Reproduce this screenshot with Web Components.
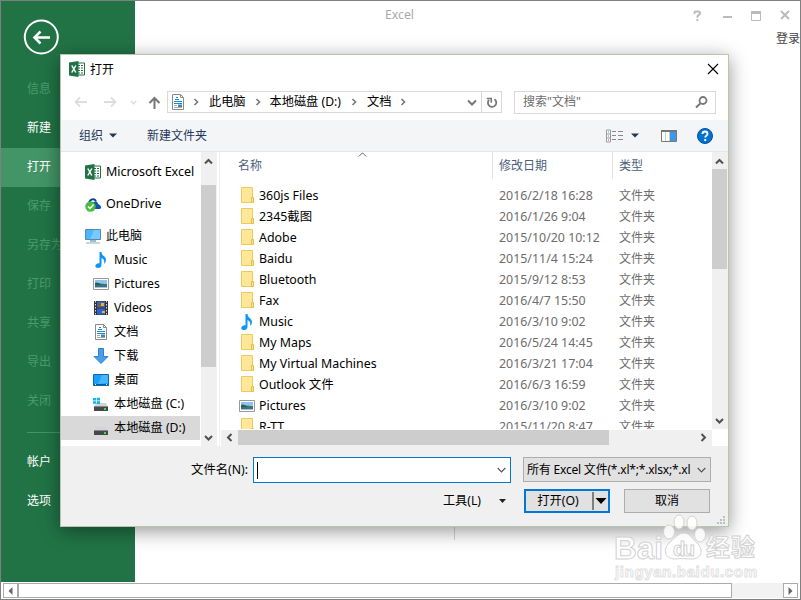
<!DOCTYPE html>
<html lang="zh-CN">
    <head>
        <meta charset="UTF-8" />
        <meta name="viewport" content="width=device-width, initial-scale=1.0" />
        <title>Excel</title>
        <style>
            body {
                margin: 0;
                overflow: hidden;
                font: 12px/18px 'Noto Sans', 'Noto Sans CJK SC', sans-serif;
                color: #000;
            }
        </style>
    </head>
    <body>
        <excel-window></excel-window>

        <template id="excel-window">
            <style>
                :host {
                    display: grid;
                    grid-template-columns: 134px 1fr;
                    grid-template-rows: 581px 17px;
                    box-sizing: border-box;
                    width: 801px;
                    height: 600px;
                    border: 1px solid #808080;
                    background: #fff;
                    position: relative;
                    overflow: hidden;
                }
                .main {
                    display: flex;
                    flex-direction: column;
                }
                .title {
                    display: flex;
                    align-items: center;
                    height: 29px;
                    color: #aaa;
                    font-size: 12.3px;
                }
                .title span {
                    flex: 1;
                    padding: 0 26px 2px 0;
                    text-align: center;
                }
                .title ui-icon {
                    margin-right: 13px;
                }
                .title ui-icon:last-child {
                    margin-right: 8px;
                }
                .login {
                    text-align: right;
                    color: #444;
                }
                .rule {
                    width: 1px;
                    height: 70px;
                    margin: 422px 0 0 319px;
                    background: #d5d5d5;
                }
                bottom-bar {
                    grid-column: 1 / 3;
                }
                open-dialog {
                    position: absolute;
                    left: 59px;
                    top: 53px;
                }
                water-mark {
                    position: absolute;
                    left: 609px;
                    top: 509px;
                }
            </style>
            <side-nav>
                <nav-item dim>信息</nav-item>
                <nav-item>新建</nav-item>
                <nav-item active>打开</nav-item>
                <nav-item dim>保存</nav-item>
                <nav-item dim>另存为</nav-item>
                <nav-item dim>打印</nav-item>
                <nav-item dim>共享</nav-item>
                <nav-item dim>导出</nav-item>
                <nav-item dim>关闭</nav-item>
                <nav-item slot="bottom">帐户</nav-item>
                <nav-item slot="bottom">选项</nav-item>
            </side-nav>
            <div class="main">
                <div class="title">
                    <span>Excel</span>
                    <ui-icon name="winhelp" style="margin-right: 14px"></ui-icon>
                    <ui-icon name="winmin"></ui-icon>
                    <ui-icon name="winmax"></ui-icon>
                    <ui-icon name="winclose"></ui-icon>
                </div>
                <div class="login">登录</div>
                <div class="rule"></div>
            </div>
            <bottom-bar></bottom-bar>
            <open-dialog></open-dialog>
            <water-mark></water-mark>
        </template>

        <template id="side-nav">
            <style>
                :host {
                    display: flex;
                    flex-direction: column;
                    background: #217346;
                }
                ui-icon {
                    margin: 18px 0 15px 22px;
                }
                hr {
                    margin: 11px 0 10px 26px;
                    border: 0;
                    width: 84px;
                    height: 1px;
                    background: #439467;
                }
            </style>
            <ui-icon name="back"></ui-icon>
            <slot></slot>
            <hr />
            <slot name="bottom"></slot>
        </template>

        <template id="nav-item">
            <style>
                :host {
                    display: flex;
                    align-items: center;
                    box-sizing: border-box;
                    height: 39px;
                    padding: 0 0 2px 26px;
                    color: #fff;
                }
                :host([dim]) {
                    color: #4a9b6e;
                }
                :host([active]) {
                    background: #439467;
                }
            </style>
            <slot></slot>
        </template>

        <template id="bottom-bar">
            <style>
                :host {
                    display: flex;
                    box-sizing: border-box;
                    height: 15px;
                    margin: 1px 2px;
                    background: #f2f2f2;
                }
                div {
                    display: flex;
                    align-items: center;
                    justify-content: center;
                    box-sizing: border-box;
                    width: 15px;
                    border: 1px solid #ababab;
                    background: #fff;
                }
                .thumb {
                    width: 714px;
                    border-left-width: 1px;
                    margin-right: auto;
                }
            </style>
            <div><ui-icon name="triLeft"></ui-icon></div>
            <div class="thumb"></div>
            <div><ui-icon name="triRight"></ui-icon></div>
        </template>

        <template id="open-dialog">
            <style>
                :host {
                    display: flex;
                    flex-direction: column;
                    box-sizing: border-box;
                    width: 669px;
                    height: 473px;
                    border: 1px solid #b9c6af;
                    background: #fff;
                    box-shadow: 0 4px 18px rgba(0, 0, 0, 0.42);
                }
                .row {
                    display: flex;
                    align-items: center;
                }
                .title {
                    height: 28px;
                    padding: 0 9px 1px 8px;
                    gap: 5px;
                }
                .title span {
                    flex: 1;
                    padding-top: 1px;
                }
                .nav {
                    height: 36px;
                    padding: 0 12px 0 13px;
                    box-sizing: border-box;
                }
                .path {
                    display: flex;
                    align-items: center;
                    box-sizing: border-box;
                    width: 335px;
                    height: 22px;
                    margin: 0 12px 0 6px;
                    padding-left: 2px;
                    border: 1px solid #d9d9d9;
                }
                .path span {
                    white-space: nowrap;
                    font-size: 12.2px;
                }
                .path .reload {
                    display: flex;
                    align-items: center;
                    justify-content: center;
                    align-self: stretch;
                    width: 19px;
                    border-left: 1px solid #d9d9d9;
                }
                .search {
                    display: flex;
                    align-items: center;
                    justify-content: space-between;
                    box-sizing: border-box;
                    flex: 1;
                    height: 23px;
                    padding: 0 7px 0 8px;
                    border: 1px solid #d9d9d9;
                    color: #6d6d6d;
                }
                .commands {
                    height: 31px;
                    padding: 0 15px 0 18px;
                    background: #f4f5f7;
                    border-bottom: 1px solid #e3e5e8;
                    color: #1e395b;
                }
                .body {
                    display: flex;
                    height: 294px;
                }
                .tree {
                    box-sizing: border-box;
                    width: 140px;
                    padding-top: 8px;
                }
                .tree-scroll {
                    --before: 16px;
                    --thumb: 182px;
                }
                .split {
                    width: 1px;
                    margin: 0 1px 0 2px;
                    background: #f0f0f0;
                }
                .list {
                    width: 491px;
                    display: flex;
                    flex-direction: column;
                }
                .head {
                    display: grid;
                    grid-template-columns: 271px 120px 1fr;
                    flex: none;
                    height: 27px;
                    margin-bottom: 6px;
                    color: #4c607a;
                    position: relative;
                }
                .head span {
                    padding: 5px 0 0 6px;
                    border-left: 1px solid #e5e5e5;
                }
                .head span:first-child {
                    padding-left: 16px;
                    border-color: #fff;
                }
                .head ui-icon {
                    position: absolute;
                    left: 137px;
                    top: 0;
                }
                .files {
                    height: 244px;
                    overflow: hidden;
                }
                .list-bottom {
                    --before: 0px;
                    --thumb: 371px;
                    margin-top: 1px;
                }
                .list-scroll {
                    --before: 0px;
                    --thumb: 100px;
                    height: 277px;
                }
                .footer {
                    position: relative;
                    flex: 1;
                    display: grid;
                    grid-template-columns: 187px 258px 188px;
                    grid-template-rows: 26px 24px;
                    column-gap: 12px;
                    row-gap: 6px;
                    padding-top: 11px;
                    background: #f0f0f0;
                }
                .footer label {
                    text-align: right;
                    padding-top: 4px;
                    font-size: 12.3px;
                }
                .file {
                    display: flex;
                    align-items: center;
                    justify-content: space-between;
                    box-sizing: border-box;
                    margin-left: -7px;
                    width: 258px;
                    padding: 0 4px 0 3px;
                    border: 1px solid #0078d7;
                    background: #fff;
                }
                .caret {
                    width: 1px;
                    height: 17px;
                    background: #000;
                }
                .filter {
                    display: flex;
                    align-items: center;
                    justify-content: space-between;
                    box-sizing: border-box;
                    width: 188px;
                    height: 25px;
                    margin-left: -7px;
                    padding: 0 4px 0 3px;
                    border: 1px solid #adadad;
                    background: #e1e1e1;
                }
                .filter span {
                    white-space: nowrap;
                    letter-spacing: -0.2px;
                }
                .tools {
                    grid-column: 2;
                    display: flex;
                    align-items: center;
                    justify-content: flex-end;
                    gap: 18px;
                    padding-right: 12px;
                    font-size: 12.2px;
                }
                .buttons {
                    display: flex;
                    gap: 14px;
                    margin-left: -6px;
                }
                .btn {
                    display: flex;
                    align-items: center;
                    justify-content: center;
                    box-sizing: border-box;
                    width: 86px;
                    border: 1px solid #adadad;
                    background: #e1e1e1;
                }
                .primary {
                    border: 2px solid #0078d7;
                }
                .primary span {
                    flex: 1;
                    padding-right: 2px;
                    text-align: center;
                    font-size: 12.3px;
                }
                .primary ui-icon {
                    padding: 0 1px;
                    border-left: 2px solid #808080;
                }
                .grip {
                    position: absolute;
                    right: 2px;
                    bottom: 1px;
                }
            </style>
            <div class="row title">
                <ui-icon name="excel"></ui-icon>
                <span>打开</span>
                <ui-icon name="close"></ui-icon>
            </div>
            <div class="row nav">
                <ui-icon name="left"></ui-icon>
                <ui-icon name="right" style="margin-left: 17px"></ui-icon>
                <ui-icon name="recent" style="margin-left: 13px"></ui-icon>
                <ui-icon name="up" style="margin-left: 11px"></ui-icon>
                <div class="path">
                    <ui-icon name="doc"></ui-icon>
                    <ui-icon name="crumb" style="margin: 0 10px 0 7px"></ui-icon>
                    <span>此电脑</span>
                    <ui-icon name="crumb" style="margin: 0 9px 0 9px"></ui-icon>
                    <span>本地磁盘 (D:)</span>
                    <ui-icon name="crumb" style="margin: 0 10px 0 10px"></ui-icon>
                    <span>文档</span>
                    <ui-icon name="crumb" style="margin: 0 auto 0 9px"></ui-icon>
                    <ui-icon name="arrowDown" style="margin-right: 4px"></ui-icon>
                    <div class="reload"><ui-icon name="reload"></ui-icon></div>
                </div>
                <div class="search">
                    <span>搜索"文档"</span>
                    <ui-icon name="search"></ui-icon>
                </div>
            </div>
            <div class="row commands">
                <span>组织</span>
                <ui-icon name="drop" style="margin: 0 30px 0 6px"></ui-icon>
                <span>新建文件夹</span>
                <ui-icon name="view" style="margin-left: auto"></ui-icon>
                <ui-icon name="drop" style="margin: 0 22px 0 8px"></ui-icon>
                <ui-icon name="pane"></ui-icon>
                <ui-icon name="help" style="margin-left: 20px"></ui-icon>
            </div>
            <div class="body">
                <div class="tree">
                    <tree-item icon="excel" root>Microsoft Excel</tree-item>
                    <tree-item icon="onedrive" root>OneDrive</tree-item>
                    <tree-item icon="pc" root last>此电脑</tree-item>
                    <tree-item icon="music">Music</tree-item>
                    <tree-item icon="picture">Pictures</tree-item>
                    <tree-item icon="video">Videos</tree-item>
                    <tree-item icon="doc">文档</tree-item>
                    <tree-item icon="download">下载</tree-item>
                    <tree-item icon="desktop">桌面</tree-item>
                    <tree-item icon="diskc">本地磁盘 (C:)</tree-item>
                    <tree-item icon="disk" selected>本地磁盘 (D:)</tree-item>
                </div>
                <scroll-bar class="tree-scroll"></scroll-bar>
                <div class="split"></div>
                <div class="list">
                    <div class="head">
                        <span>名称</span>
                        <span>修改日期</span>
                        <span>类型</span>
                        <ui-icon name="sort"></ui-icon>
                    </div>
                    <div class="files">
                        <file-row date="2016/2/18 16:28">360js Files</file-row>
                        <file-row date="2016/1/26 9:04">2345截图</file-row>
                        <file-row date="2015/10/20 10:12">Adobe</file-row>
                        <file-row date="2015/11/4 15:24">Baidu</file-row>
                        <file-row date="2015/9/12 8:53">Bluetooth</file-row>
                        <file-row date="2016/4/7 15:50">Fax</file-row>
                        <file-row date="2016/3/10 9:02" icon="music">Music</file-row>
                        <file-row date="2016/5/24 14:45">My Maps</file-row>
                        <file-row date="2016/3/21 17:04">My Virtual Machines</file-row>
                        <file-row date="2016/6/3 16:59">Outlook 文件</file-row>
                        <file-row date="2016/3/10 9:02" icon="picture">Pictures</file-row>
                        <file-row date="2015/11/20 8:47">R-TT</file-row>
                    </div>
                    <scroll-bar class="list-bottom" horizontal></scroll-bar>
                </div>
                <scroll-bar class="list-scroll"></scroll-bar>
            </div>
            <div class="footer">
                <label>文件名(N):</label>
                <div class="file">
                    <div class="caret"></div>
                    <ui-icon name="chevron"></ui-icon>
                </div>
                <div class="filter">
                    <span>所有 Excel 文件(*.xl*;*.xlsx;*.xl</span>
                    <ui-icon name="chevron"></ui-icon>
                </div>
                <div class="tools">
                    <span>工具(L)</span>
                    <ui-icon name="smallDrop"></ui-icon>
                </div>
                <div class="buttons">
                    <div class="btn primary">
                        <span>打开(O)</span>
                        <ui-icon name="bigDrop"></ui-icon>
                    </div>
                    <div class="btn">取消</div>
                </div>
                <ui-icon class="grip" name="grip"></ui-icon>
            </div>
        </template>

        <template id="tree-item">
            <style>
                :host {
                    display: flex;
                    align-items: center;
                    gap: 5px;
                    width: 139px;
                    height: 24px;
                    box-sizing: border-box;
                    padding-left: 32px;
                    white-space: nowrap;
                    font-size: 12.2px;
                }
                :host([root]) {
                    padding-left: 24px;
                    margin-bottom: 8px;
                    font-size: 12.5px;
                }
                :host([last]) {
                    margin-bottom: 0;
                    font-size: 12px;
                }
                :host([selected]) {
                    background: #d9d9d9;
                }
            </style>
            <ui-icon></ui-icon>
            <span><slot></slot></span>
        </template>

        <template id="file-row">
            <style>
                :host {
                    display: grid;
                    grid-template-columns: 20px 240px 120px 1fr;
                    align-items: center;
                    height: 21px;
                    padding-left: 18px;
                    font-size: 12.4px;
                }
                .date,
                .type {
                    color: #6d6d6d;
                }
                .type {
                    font-size: 12px;
                }
            </style>
            <ui-icon></ui-icon>
            <span><slot></slot></span>
            <span class="date"></span>
            <span class="type">文件夹</span>
        </template>

        <template id="scroll-bar">
            <style>
                :host {
                    display: flex;
                    flex-direction: column;
                    width: 16px;
                    background: #f0f0f0;
                }
                .btn {
                    display: flex;
                    align-items: center;
                    justify-content: center;
                    flex: none;
                    width: 15px;
                    height: 17px;
                }
                .thumb {
                    width: 15px;
                    height: var(--thumb);
                    margin: var(--before) 0 auto;
                    background: #cdcdcd;
                }
                :host([horizontal]) {
                    flex-direction: row;
                    width: auto;
                    height: 16px;
                }
                :host([horizontal]) .btn {
                    width: 17px;
                    height: 15px;
                }
                :host([horizontal]) .thumb {
                    width: var(--thumb);
                    height: 15px;
                    margin: 0 auto 0 var(--before);
                }
            </style>
            <div class="btn"><ui-icon></ui-icon></div>
            <div class="thumb"></div>
            <div class="btn"><ui-icon></ui-icon></div>
        </template>

        <template id="water-mark">
            <style>
                :host {
                    display: block;
                    width: 160px;
                    height: 76px;
                }
                svg {
                    display: block;
                }
                text {
                    font-family: 'Liberation Sans', 'Noto Sans CJK SC', sans-serif;
                    font-weight: bold;
                }
            </style>
            <svg width="160" height="76" fill="#fff" fill-opacity=".85" stroke="#d2d2d2" stroke-width="1">
                <text x="4" y="49" font-size="31" textLength="49" lengthAdjust="spacingAndGlyphs">Bai</text>
                <ellipse cx="59" cy="22" rx="5.5" ry="7" />
                <ellipse cx="69" cy="12" rx="5" ry="7" />
                <ellipse cx="82" cy="13" rx="5" ry="7" />
                <ellipse cx="90" cy="25" rx="5.5" ry="7" />
                <path d="M74 23c6 0 8 6 13 10 6 5 6 15-4 16-6 0-12-1-18 0-11 0-12-10-6-16 5-4 9-10 15-10z" />
                <text x="63" y="46" font-size="20" textLength="22">du</text>
                <text x="96" y="46" font-size="24" textLength="49">经验</text>
                <text x="5" y="67" font-size="15" textLength="142" stroke="#e2e2e2">jingyan.baidu.com</text>
            </svg>
        </template>

        <script>
            const docBody =
                '<path d="M2.5.5h8l3 3v12h-11z" fill="#fff" stroke="#8a8a8a"/><path d="M10.5.5v3h3" fill="none" stroke="#8a8a8a"/><path d="M6 3.5h2M5 5.5h4M4 7.5h8M4 9.5h8" stroke="#1e88d2"/><path d="M4 11.5h3M4 13.5h8" stroke="#aaa"/><path d="M8 10.5h4V13H8z" fill="#3d87b8"/>'
            const diskBody =
                '<path d="M3 7h10l2 4H1z" fill="#d2d4d6"/><path d="M1 10.5h14V15H1z" fill="#45494c"/><path d="M1 10.5h14" stroke="#888"/><path d="M11 12h2v2h-2z" fill="#38e038"/>'

            // name: [width, height, markup]
            const icons = {
                back: [36, 36, '<g fill="none" stroke="#fff"><circle cx="18.3" cy="18" r="16.5" stroke-width="2"/><path d="M11.5 18.5H27M17.5 12.5l-6 6 6 6" stroke-width="2.5"/></g>'],
                winhelp: [15, 15, '<path d="M4.5 6V4.5Q4.5 3.5 6 3.5h2.5Q10 3.5 10 5q0 1.300-1.300 2T7.400 9v.8M7.400 11v2" fill="none" stroke="#bbb" stroke-width="2"/>'],
                winmin: [16, 15, '<path d="M4 8h9v2H4z" fill="#bbb"/>'],
                winmax: [16, 15, '<path d="M3.5 3.5h9v9h-9z" fill="none" stroke="#bbb"/><path d="M3 3h10v3H3z" fill="#bbb"/>'],
                winclose: [15, 15, '<path d="M4 3l8 8M12 3l-8 8" stroke="#bbb" stroke-width="2"/>'],
                triLeft: [5, 8, '<path d="M4.5 0v8L.5 4z" fill="#666"/>'],
                triRight: [5, 8, '<path d="M.5 0v8l4-4z" fill="#666"/>'],
                excel: [16, 16, '<path d="M8 2h7.5v12H8z" fill="#fff" stroke="#217346"/><path d="M9 4.5h5M9 7h5M9 9.5h5M9 12h5" stroke="#217346" stroke-dasharray="2 1"/><path d="M0 1.5L9.5 0v16L0 14.5z" fill="#217346"/><path d="M2.8 4.5l4 7M6.8 4.5l-4 7" stroke="#fff" stroke-width="1.5"/>'],
                close: [12, 12, '<path d="M1 1l10 10M11 1L1 11" stroke="#000" stroke-width="1.1"/>'],
                left: [13, 12, '<path d="M1 6h12M6 1.5L1.5 6 6 10.5" fill="none" stroke="#ddd" stroke-width="1.8"/>'],
                right: [13, 12, '<path d="M0 6h12M7 1.5L11.5 6 7 10.5" fill="none" stroke="#ddd" stroke-width="1.8"/>'],
                recent: [7, 5, '<path d="M.8 1l2.7 2.7L6.2 1" fill="none" stroke="#ddd" stroke-width="1.6"/>'],
                up: [13, 13, '<path d="M6.5 13V2M1.5 7l5-5 5 5" fill="none" stroke="#777" stroke-width="2"/>'],
                crumb: [6, 8, '<path d="M1.5 1l3 3-3 3" fill="none" stroke="#777" stroke-width="1.6"/>'],
                arrowDown: [10, 7, '<path d="M1 1.5l4 4 4-4" fill="none" stroke="#777" stroke-width="2"/>'],
                reload: [12, 13, '<path d="M8.5 3.2A4.2 4.2 0 1 1 3 3.8" fill="none" stroke="#777" stroke-width="1.8"/><path d="M.8 2.5h4.5v4.2" fill="none" stroke="#777" stroke-width="1.6"/>'],
                search: [13, 13, '<circle cx="8" cy="4.5" r="3.5" fill="none" stroke="#777" stroke-width="1.8"/><path d="M5.5 7.2L1 11.5" stroke="#777" stroke-width="2"/>'],
                drop: [8, 5, '<path d="M0 .5h8L4 4.5z" fill="#1e395b"/>'],
                smallDrop: [7, 4, '<path d="M0 0h7L3.5 4z" fill="#222"/>'],
                bigDrop: [12, 18, '<path d="M.5 6h11L6 12z" fill="#000"/>'],
                view: [17, 14, '<path d="M.5 1h4v12h-4zM.5 5h4M.5 9h4" fill="#fff" stroke="#999"/><path d="M6 2.5h4M12 2.5h5M6 6.5h4M12 6.5h5M6 10.5h4M12 10.5h5" stroke="#888"/><path d="M2 3h1M2 7h1" stroke="#39f"/><path d="M2 11h1" stroke="#d33"/>'],
                pane: [16, 12, '<path d="M.5.5h15v11H.5z" fill="#fff" stroke="#777"/><path d="M0 0h16v2H0z" fill="#777"/><path d="M4.5 2v9M8.5 2v9" stroke="#ccc"/><path d="M9 2h6v9H9z" fill="#3c97e4"/>'],
                help: [16, 16, '<circle cx="8" cy="8" r="7.5" fill="#0072d0" stroke="#00539b"/><path d="M5.5 6c0-3.3 5-3.3 5 0 0 1.6-2.3 1.8-2.3 3.5M8.2 11v2" fill="none" stroke="#fff" stroke-width="1.9"/>'],
                sort: [9, 5, '<path d="M.8 4.5L4.5.8l3.7 3.7" fill="none" stroke="#666"/>'],
                chevron: [9, 6, '<path d="M.7 1l3.8 3.8L8.3 1" fill="none" stroke="#555" stroke-width="1.2"/>'],
                sUp: [9, 7, '<path d="M1 6.5L4.5 3 8 6.5" fill="none" stroke="#505050" stroke-width="2"/>'],
                sDown: [9, 7, '<path d="M1 2L4.5 5.5 8 2" fill="none" stroke="#505050" stroke-width="2"/>'],
                sLeft: [7, 9, '<path d="M5.5 1L2 4.5 5.5 8" fill="none" stroke="#505050" stroke-width="2"/>'],
                sRight: [7, 9, '<path d="M1.5 1L5 4.5 1.5 8" fill="none" stroke="#505050" stroke-width="2"/>'],
                folder: [16, 17, '<path d="M2.5.5h11v15h-11z" fill="#ffe799" stroke="#eccb58"/><path d="M12.5 10.5h2v5h-2z" fill="#ffe28a" stroke="#e5bf45"/>'],
                music: [16, 16, '<path d="M6.5 0h2c0 4 4.5 4 4.5 8 0 2-1 3-2 4 .8-3 0-5-2.5-6v6.500C8.500 15 7 16 5 16c-3 0-3.5-2.5-1.5-4 1-.7 2-.8 3-.5z" fill="#0c97f5"/>'],
                picture: [16, 12, '<path d="M.5.5h15v11H.5z" fill="#fff" stroke="#999"/><path d="M2 2h12v4H2z" fill="#8cc5f0"/><path d="M2 5c3-1 5 1 12 1v4H2z" fill="#3f7181"/><path d="M2 5c3-1 4 1 7 2H2z" fill="#2f5d43"/><path d="M2 9.5h12" stroke="#9cc4dc"/>'],
                video: [16, 16, '<path d="M1 1h14v14H1z" fill="#333"/><path d="M4 1.5h8v6H4z" fill="#3c64b4"/><path d="M4 8.5h8v6H4z" fill="#2a62d8"/><path d="M2.5 1v14M13.5 1v14" stroke="#ddd" stroke-dasharray="1.5 1.5"/><path d="M8 3h3v3H8zM9 11h3v2H9z" fill="#e2b92c"/><path d="M5 5h3v2H5z" fill="#b54c2c"/>'],
                doc: [16, 16, docBody],
                download: [16, 16, '<path d="M5.5.5h5v8H15L8 15.5 1 8.5h4.500z" fill="#4a9ee8" stroke="#2b82d4"/>'],
                desktop: [16, 12, '<path d="M.5.5h15v11H.5z" fill="#18a0fb" stroke="#0669b2"/><path d="M9 1h6v8L5 10z" fill="#45b6ff"/><path d="M1 10.5h14" stroke="#075a99"/><path d="M2 10.5h1M13 10.5h1" stroke="#fff"/>'],
                pc: [16, 16, '<path d="M.5 1.5h15v10H.5z" fill="#4bb5ff" stroke="#5688ad"/><path d="M9 2h6v9H5z" fill="#76caff"/><path d="M5 13h6" stroke="#7ba9c5" stroke-width="1.5"/><path d="M1 15h14" stroke="#98a8b4"/>'],
                onedrive: [16, 16, '<path d="M6 13C4 9 6 6 9 6c2-2 4 0 4 2 3 1 4 4 2 5z" fill="#1551b5"/><path d="M4 7c1-4 5-5 7-2" fill="none" stroke="#0e3f96" stroke-width="2"/><circle cx="5.5" cy="10.5" r="5.2" fill="#46bd3b"/><path d="M3 10.5l2 2 3.5-4" fill="none" stroke="#fff" stroke-width="1.6"/>'],
                diskc: [16, 16, diskBody + '<path d="M0 2h3v2.5H0zM3.7 1.8H7v2.7H3.7zM0 5.2h3v2.5H0zM3.7 5.2H7V8H3.7z" fill="#13b5ea"/>'],
                disk: [16, 16, diskBody],
                grip: [9, 9, '<path d="M6 0h2v2H6zM3 3h2v2H3zM6 3h2v2H6zM0 6h2v2H0zM3 6h2v2H3zM6 6h2v2H6z" fill="#bfbfbf"/>'],
            }

            class BaseElement extends HTMLElement {
                constructor() {
                    super()
                    const template = document.querySelector(
                        '#' + this.localName
                    )
                    this.attachShadow({ mode: 'open' }).appendChild(
                        template.content.cloneNode(true)
                    )
                }
            }

            customElements.define(
                'ui-icon',
                class extends HTMLElement {
                    static observedAttributes = ['name']
                    constructor() {
                        super()
                        this.attachShadow({ mode: 'open' })
                    }
                    attributeChangedCallback() {
                        const [w, h, markup] = icons[this.getAttribute('name')]
                        this.shadowRoot.innerHTML = `
                            <style>
                                :host { display: block; flex: none; }
                                svg { display: block; }
                            </style>
                            <svg width="${w}" height="${h}" viewBox="0 0 ${w} ${h}">${markup}</svg>`
                    }
                }
            )

            customElements.define(
                'tree-item',
                class extends BaseElement {
                    connectedCallback() {
                        this.shadowRoot
                            .querySelector('ui-icon')
                            .setAttribute('name', this.getAttribute('icon'))
                    }
                }
            )

            customElements.define(
                'file-row',
                class extends BaseElement {
                    connectedCallback() {
                        const root = this.shadowRoot
                        root.querySelector('ui-icon').setAttribute(
                            'name',
                            this.getAttribute('icon') || 'folder'
                        )
                        root.querySelector('.date').textContent =
                            this.getAttribute('date')
                    }
                }
            )

            customElements.define(
                'scroll-bar',
                class extends BaseElement {
                    connectedCallback() {
                        const names = this.hasAttribute('horizontal')
                            ? ['sLeft', 'sRight']
                            : ['sUp', 'sDown']
                        this.shadowRoot
                            .querySelectorAll('ui-icon')
                            .forEach((icon, i) => {
                                icon.setAttribute('name', names[i])
                            })
                    }
                }
            )

            customElements.define('nav-item', class extends BaseElement {})
            customElements.define('side-nav', class extends BaseElement {})
            customElements.define('bottom-bar', class extends BaseElement {})
            customElements.define('water-mark', class extends BaseElement {})
            customElements.define('open-dialog', class extends BaseElement {})
            customElements.define('excel-window', class extends BaseElement {})
        </script>
    </body>
</html>
